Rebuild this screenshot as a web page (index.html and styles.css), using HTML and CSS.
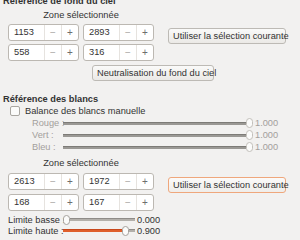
FILE: index.html
```html
<!DOCTYPE html>
<html lang="fr">
<head>
    <meta charset="UTF-8">
    <title>Référence de fond du ciel</title>
    <link rel="stylesheet" href="styles.css">
</head>
<body>
    <div class="page">
        <h3 class="section-title first">Référence de fond du ciel</h3>

        <div class="zone">
            <div class="zone-grid">
                <div class="zone-label">Zone sélectionnée</div>
                <div class="spin"><span class="spin-value">1153</span><span class="spin-btn minus">−</span><span class="spin-btn">+</span></div>
                <div class="spin"><span class="spin-value">2893</span><span class="spin-btn minus">−</span><span class="spin-btn">+</span></div>
                <div class="spin"><span class="spin-value">558</span><span class="spin-btn minus">−</span><span class="spin-btn">+</span></div>
                <div class="spin"><span class="spin-value">316</span><span class="spin-btn minus">−</span><span class="spin-btn">+</span></div>
            </div>
            <button class="btn use-btn">Utiliser la sélection courante</button>
        </div>

        <div class="neutral-row">
            <button class="btn neutral-btn">Neutralisation du fond du ciel</button>
        </div>

        <h3 class="section-title second">Référence des blancs</h3>
        <label class="check"><span class="box"></span>Balance des blancs manuelle</label>

        <div class="channels">
            <span class="ch-label">Rouge :</span>
            <div class="slider disabled"><span class="fill" style="flex-grow: 1"></span><span class="knob"></span></div>
            <span class="ch-value">1.000</span>

            <span class="ch-label">Vert :</span>
            <div class="slider disabled"><span class="fill" style="flex-grow: 1"></span><span class="knob"></span></div>
            <span class="ch-value">1.000</span>

            <span class="ch-label">Bleu :</span>
            <div class="slider disabled"><span class="fill" style="flex-grow: 1"></span><span class="knob"></span></div>
            <span class="ch-value">1.000</span>
        </div>

        <div class="zone zone-wb">
            <div class="zone-grid">
                <div class="zone-label">Zone sélectionnée</div>
                <div class="spin"><span class="spin-value">2613</span><span class="spin-btn minus">−</span><span class="spin-btn">+</span></div>
                <div class="spin"><span class="spin-value">1972</span><span class="spin-btn minus">−</span><span class="spin-btn">+</span></div>
                <div class="spin"><span class="spin-value">168</span><span class="spin-btn minus">−</span><span class="spin-btn">+</span></div>
                <div class="spin"><span class="spin-value">167</span><span class="spin-btn minus">−</span><span class="spin-btn">+</span></div>
            </div>
            <button class="btn use-btn focused">Utiliser la sélection courante</button>
        </div>

        <div class="limits">
            <span class="lim-label">Limite basse :</span>
            <div class="slider"><span class="knob"></span><span class="rest"></span></div>
            <span class="lim-value">0.000</span>

            <span class="lim-label">Limite haute :</span>
            <div class="slider"><span class="fill active" style="width: 59px"></span><span class="knob"></span><span class="rest"></span></div>
            <span class="lim-value">0.900</span>
        </div>
    </div>
</body>
</html>
```

FILE: styles.css
```css
body {
    margin: 0;
    background: #f2f1f0;
    font-family: "Liberation Sans Narrow", "Liberation Sans", Arial, sans-serif;
    font-size: 9.25px;
    color: #333;
    overflow: hidden;
    white-space: nowrap;
}

.page {
    width: 300px;
}

.section-title {
    margin: 0;
    font-size: 9.25px;
    font-weight: bold;
    line-height: 12px;
    padding-left: 3px;
}

.section-title.first {
    margin-top: -5px;
}

.section-title.second {
    margin-top: 13px;
    line-height: 11px;
}

.zone {
    display: flex;
    align-items: flex-start;
    margin-top: 3px;
    padding-left: 8px;
}

.zone-grid {
    display: grid;
    grid-template-columns: 71px 71px;
    column-gap: 4px;
    row-gap: 3px;
}

.zone-label {
    grid-column: 1 / 3;
    text-align: center;
    line-height: 11px;
}

.spin {
    display: flex;
    height: 17px;
    box-sizing: border-box;
    border: 1px solid #bcb8b2;
    border-radius: 3px;
    background: #fff;
    line-height: 15px;
}

.spin-value {
    flex: 1;
    padding-left: 5px;
}

.spin-btn {
    width: 16px;
    text-align: center;
    border-left: 1px solid #e6e3df;
    color: #6e6e6e;
    font-size: 10px;
}

.spin-btn.minus {
    color: #a8a6a3;
}

.btn {
    font-family: inherit;
    font-size: 9.25px;
    color: #333;
    height: 16px;
    padding: 0 4px;
    border: 1px solid #bdbab5;
    border-radius: 3px;
    background: linear-gradient(#fafaf9, #ebe9e6);
    line-height: 14px;
    white-space: nowrap;
}

.use-btn {
    width: 118px;
    margin-left: 14px;
    margin-top: 18px;
}

.use-btn.focused {
    border-color: #efa77c;
    background: linear-gradient(#fbfaf9, #efedea);
}

.neutral-row {
    padding-left: 92px;
    margin-top: 4px;
}

.neutral-btn {
    width: 122px;
}

.check {
    display: flex;
    align-items: center;
    gap: 5px;
    padding-left: 10px;
    line-height: 12px;
}

.box {
    width: 8px;
    height: 8px;
    border: 1px solid #a9a6a1;
    border-radius: 2px;
    background: #fbfbfa;
}

.channels {
    display: grid;
    grid-template-columns: 31px 190px 24px;
    grid-auto-rows: 12px;
    align-items: center;
    padding-left: 32px;
    color: #a3a09c;
}

.ch-value {
    padding-left: 2px;
}

.slider {
    display: flex;
    align-items: center;
    height: 10px;
}

.fill {
    height: 2px;
    background: #9a9894;
    border-top: 1px solid #7d7b77;
}

.fill.active {
    background: #df5f2c;
    border-top-color: #c8481b;
}

.rest {
    flex: 1;
    height: 2px;
    background: #b3b0ab;
    border-top: 1px solid #8f8c88;
}

.knob {
    flex: none;
    width: 5px;
    height: 8px;
    border: 1px solid #a5a29d;
    border-radius: 4px;
    background: #fbfbfa;
}

.slider.disabled .knob {
    border-color: #c3c0bb;
}

.zone-wb {
    margin-top: 5px;
}

.zone-wb .zone-grid {
    row-gap: 4px;
}

.zone-wb .use-btn {
    margin-top: 19px;
}

.limits {
    display: grid;
    grid-template-columns: 57px 70px 24px;
    grid-auto-rows: 11px;
    align-items: center;
    padding-left: 8px;
    margin-top: 3px;
}

.limits .slider {
    margin-left: -2px;
}

.lim-value {
    padding-left: 2px;
}
```
